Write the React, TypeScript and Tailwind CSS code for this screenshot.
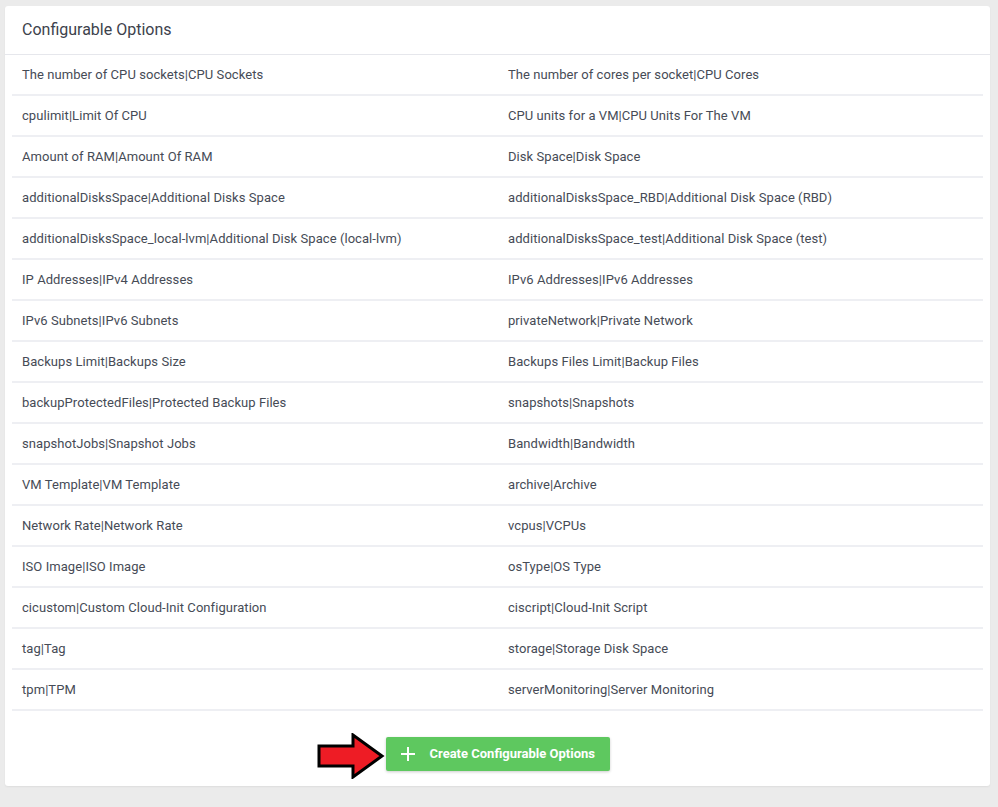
import React from "react";

const options: [string, string][] = [
  ["The number of CPU sockets|CPU Sockets", "The number of cores per socket|CPU Cores"],
  ["cpulimit|Limit Of CPU", "CPU units for a VM|CPU Units For The VM"],
  ["Amount of RAM|Amount Of RAM", "Disk Space|Disk Space"],
  ["additionalDisksSpace|Additional Disks Space", "additionalDisksSpace_RBD|Additional Disk Space (RBD)"],
  ["additionalDisksSpace_local-lvm|Additional Disk Space (local-lvm)", "additionalDisksSpace_test|Additional Disk Space (test)"],
  ["IP Addresses|IPv4 Addresses", "IPv6 Addresses|IPv6 Addresses"],
  ["IPv6 Subnets|IPv6 Subnets", "privateNetwork|Private Network"],
  ["Backups Limit|Backups Size", "Backups Files Limit|Backup Files"],
  ["backupProtectedFiles|Protected Backup Files", "snapshots|Snapshots"],
  ["snapshotJobs|Snapshot Jobs", "Bandwidth|Bandwidth"],
  ["VM Template|VM Template", "archive|Archive"],
  ["Network Rate|Network Rate", "vcpus|VCPUs"],
  ["ISO Image|ISO Image", "osType|OS Type"],
  ["cicustom|Custom Cloud-Init Configuration", "ciscript|Cloud-Init Script"],
  ["tag|Tag", "storage|Storage Disk Space"],
  ["tpm|TPM", "serverMonitoring|Server Monitoring"],
];

function RedArrow() {
  return (
    <svg width="68" height="46" viewBox="0 0 68 46" className="absolute left-[-69px] top-[-4px]">
      <polygon
        points="2,13 36,13 36,2 65,23 36,44 36,33 2,33"
        fill="#ee1c25"
        stroke="#000"
        strokeWidth="3"
        strokeLinejoin="miter"
      />
    </svg>
  );
}

export default function App() {
  return (
    <div
      className="min-h-[807px] w-[998px] bg-[#ebebeb] pl-[5px] pr-[8px] pt-[6px] pb-[20px]"
      style={{ fontFamily: "Roboto, 'Liberation Sans', sans-serif" }}
    >
      <div className="rounded-[3px] bg-white shadow-[0_1px_2px_rgba(0,0,0,0.06)]">
        <div className="flex h-[49px] items-center border-b border-[#e6e7ec] px-[17px]">
          <h2 className="text-[16px] text-[#3d424c]">Configurable Options</h2>
        </div>
        <div className="px-[7px]">
          {options.map(([left, right], idx) => (
            <div
              key={idx}
              className="flex h-[41px] items-center border-b-2 border-[#eeeff3] text-[13px] tracking-[0.06px] text-[#464b56]"
            >
              <div className="w-[486px] px-[10px]">{left}</div>
              <div className="flex-1 px-[10px]">{right}</div>
            </div>
          ))}
        </div>
        <div className="flex justify-center pt-[26px] pb-[15px]">
          <div className="relative">
            <RedArrow />
            <button className="flex h-[34px] w-[224px] items-center rounded-[2px] bg-[#5ec85f] pl-[14px] text-[13px] font-bold text-white shadow-[0_1px_3px_rgba(0,0,0,0.2)]">
              <svg width="16" height="16" viewBox="0 0 16 16" className="mr-[14px]">
                <path d="M8 1v14M1 8h14" stroke="#fff" strokeWidth="2" />
              </svg>
              Create Configurable Options
            </button>
          </div>
        </div>
      </div>
    </div>
  );
}
